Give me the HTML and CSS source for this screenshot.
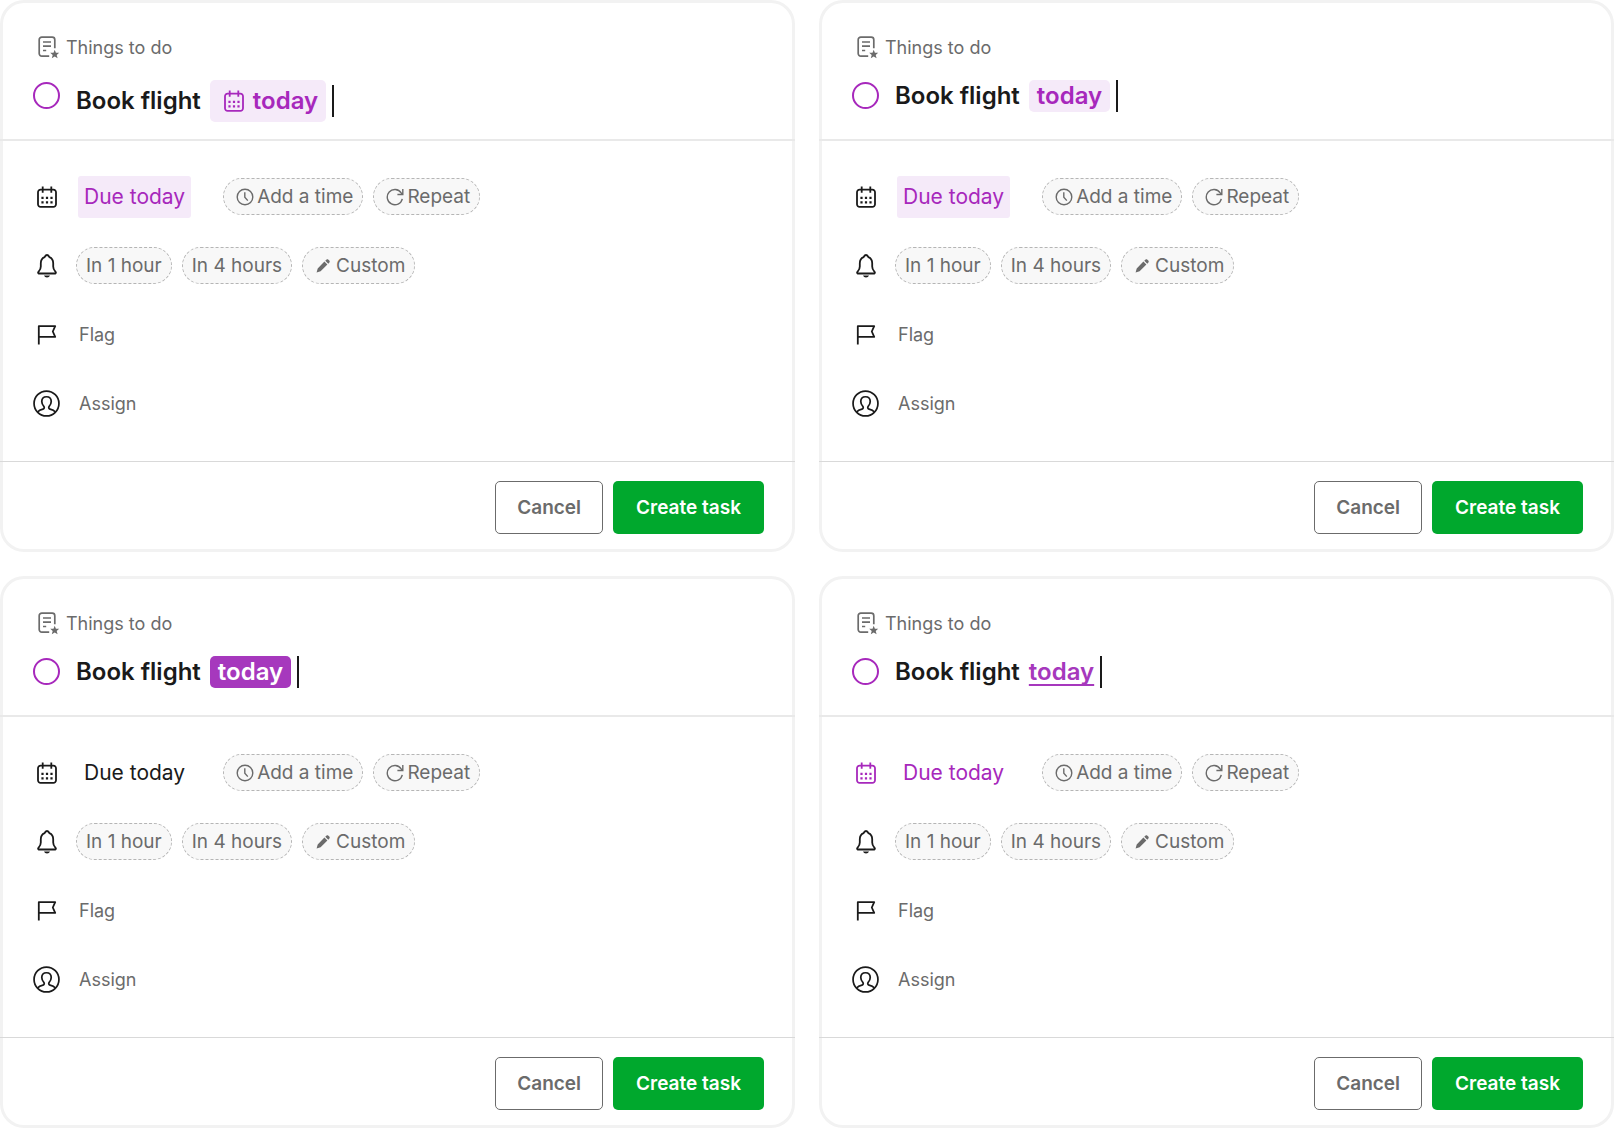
FILE: index.html
```html
<!DOCTYPE html>
<html lang="en">
<head>
  <meta charset="UTF-8">
  <meta name="viewport" content="width=device-width, initial-scale=1.0">
  <title>Create task</title>
  <link rel="stylesheet" href="styles.css">
</head>
<body>
  <!-- shared icons -->
  <svg class="sprite" aria-hidden="true">
    <symbol id="note" viewBox="0 0 22 23">
      <path d="M7.5 20.2H3.8a2.6 2.6 0 0 1-2.6-2.6V3.8a2.6 2.6 0 0 1 2.6-2.6h10.4a2.6 2.6 0 0 1 2.6 2.6v8.4M7.5 20.2h3.7M5 6h8M5 10.2h8M5 14.5h3.2" fill="none" stroke="currentColor" stroke-width="1.7"/>
      <path d="M16.7 13.8l1.2 3h3.3l-2.5 2.1.9 3.4-2.9-1.9-2.9 1.9.9-3.4-2.5-2.1h3.3z" fill="currentColor"/>
    </symbol>
    <symbol id="calendar" viewBox="0 0 20 22">
      <path d="M3.6 3.6h12.8a2.6 2.6 0 0 1 2.6 2.6v12.1a2.6 2.6 0 0 1-2.6 2.6H3.6A2.6 2.6 0 0 1 1 18.3V6.2a2.6 2.6 0 0 1 2.6-2.6zM5.7.5v6.3M14.3.5v6.3" fill="none" stroke="currentColor" stroke-width="1.8"/>
      <path d="M4.4 10.7h2.2v2.2h-2.2zM8.9 10.7h2.2v2.2H8.9zM13.4 10.7h2.2v2.2h-2.2zM4.4 15.3h2.2v2.2h-2.2zM8.9 15.3h2.2v2.2H8.9zM13.4 15.3h2.2v2.2h-2.2z" fill="currentColor"/>
    </symbol>
    <symbol id="clock" viewBox="0 0 18 18">
      <circle cx="9" cy="9" r="7.8" fill="none" stroke="currentColor" stroke-width="1.4"/>
      <path d="M8.8 4.2v5l3 3.4" fill="none" stroke="currentColor" stroke-width="1.4"/>
    </symbol>
    <symbol id="repeat" viewBox="0 0 18 18">
      <path d="M16.3 10.8A7.6 7.6 0 1 1 15.2 4.9L16.6 6.4M16.8 1v5.5h-5.4" fill="none" stroke="currentColor" stroke-width="1.4"/>
    </symbol>
    <symbol id="bell" viewBox="0 0 20 24">
      <path d="M1.5 19.5c-.8-.9-.4-1.5.3-2.2 1.3-1.3 2-2.7 2-4.7V9.3c0-3 1.6-5.2 3.8-6.1C8.2 1.7 9 1 10 1s1.800.7 2.400 2.200c2.200.9 3.800 3.100 3.800 6.100v3.300c0 2 .7 3.400 2 4.700.7.7 1.100 1.300.3 2.200z" fill="none" stroke="currentColor" stroke-width="1.8" stroke-linejoin="round"/>
      <path d="M7 21.600h6c-.5 1.200-1.600 1.900-3 1.900s-2.500-.7-3-1.900z" fill="currentColor"/>
    </symbol>
    <symbol id="pencil" viewBox="0 0 14 14">
      <path d="M.6 13.400l1.100-4 6.700-6.800 3 3-6.800 6.700zM9.300 1.700l.9-.9c.7-.7 1.600-.7 2.200-.1l.9.900c.6.600.6 1.500-.1 2.200l-.9.900z" fill="currentColor"/>
    </symbol>
    <symbol id="flag" viewBox="0 0 20 20">
      <path d="M1.800 19.600V1.200h16.400l-2.400 5.300 2.400 5.400H1.800" fill="none" stroke="currentColor" stroke-width="1.8" stroke-linejoin="round"/>
    </symbol>
    <symbol id="person" viewBox="0 0 28 28">
      <circle cx="14" cy="14" r="12.9" fill="none" stroke="currentColor" stroke-width="1.8"/>
      <path d="M4.800 22.900c1.400-1.800 3.300-2.500 5.500-3 1.200-.3 1.700-1.600 1.100-2.600-1.500-1.600-2.300-3.200-2.300-5.300 0-3 2-5 4.900-5s4.900 2 4.900 5c0 2.100-.8 3.700-2.300 5.300-.6 1-.1 2.300 1.100 2.600 2.200.5 4.100 1.200 5.500 3" fill="none" stroke="currentColor" stroke-width="1.8"/>
    </symbol>
  </svg>

  <main class="board">
    <!-- tinted chip with icon -->
    <form class="card">
      <header class="card-head">
        <div class="list-name"><svg class="icon-note"><use href="#note"/></svg>Things to do</div>
        <div class="task">
          <input class="done" type="checkbox" aria-label="Done">
          <div class="task-name">
            <span>Book flight</span>
            <span class="token token-tint token-icon"><svg class="icon-cal"><use href="#calendar"/></svg>today</span>
            <i class="caret"></i>
          </div>
        </div>
      </header>
      <ul class="options">
        <li>
          <span class="icon"><svg class="icon-cal"><use href="#calendar"/></svg></span>
          <button class="due due-tint" type="button">Due today</button>
          <button class="pill pill-icon" type="button"><svg class="icon-small"><use href="#clock"/></svg>Add a time</button>
          <button class="pill pill-icon" type="button"><svg class="icon-small"><use href="#repeat"/></svg>Repeat</button>
        </li>
        <li>
          <span class="icon"><svg class="icon-bell"><use href="#bell"/></svg></span>
          <button class="pill" type="button">In 1 hour</button>
          <button class="pill" type="button">In 4 hours</button>
          <button class="pill pill-custom" type="button"><svg class="icon-pencil"><use href="#pencil"/></svg>Custom</button>
        </li>
        <li>
          <span class="icon"><svg class="icon-flag"><use href="#flag"/></svg></span>
          <button class="plain" type="button">Flag</button>
        </li>
        <li>
          <span class="icon"><svg class="icon-person"><use href="#person"/></svg></span>
          <button class="plain" type="button">Assign</button>
        </li>
      </ul>
      <footer class="card-foot">
        <button class="btn btn-cancel" type="button">Cancel</button>
        <button class="btn btn-create" type="button">Create task</button>
      </footer>
    </form>

    <!-- tinted chip -->
    <form class="card">
      <header class="card-head">
        <div class="list-name"><svg class="icon-note"><use href="#note"/></svg>Things to do</div>
        <div class="task">
          <input class="done" type="checkbox" aria-label="Done">
          <div class="task-name">
            <span>Book flight</span>
            <span class="token token-tint">today</span>
            <i class="caret"></i>
          </div>
        </div>
      </header>
      <ul class="options">
        <li>
          <span class="icon"><svg class="icon-cal"><use href="#calendar"/></svg></span>
          <button class="due due-tint" type="button">Due today</button>
          <button class="pill pill-icon" type="button"><svg class="icon-small"><use href="#clock"/></svg>Add a time</button>
          <button class="pill pill-icon" type="button"><svg class="icon-small"><use href="#repeat"/></svg>Repeat</button>
        </li>
        <li>
          <span class="icon"><svg class="icon-bell"><use href="#bell"/></svg></span>
          <button class="pill" type="button">In 1 hour</button>
          <button class="pill" type="button">In 4 hours</button>
          <button class="pill pill-custom" type="button"><svg class="icon-pencil"><use href="#pencil"/></svg>Custom</button>
        </li>
        <li>
          <span class="icon"><svg class="icon-flag"><use href="#flag"/></svg></span>
          <button class="plain" type="button">Flag</button>
        </li>
        <li>
          <span class="icon"><svg class="icon-person"><use href="#person"/></svg></span>
          <button class="plain" type="button">Assign</button>
        </li>
      </ul>
      <footer class="card-foot">
        <button class="btn btn-cancel" type="button">Cancel</button>
        <button class="btn btn-create" type="button">Create task</button>
      </footer>
    </form>

    <!-- solid chip -->
    <form class="card">
      <header class="card-head">
        <div class="list-name"><svg class="icon-note"><use href="#note"/></svg>Things to do</div>
        <div class="task">
          <input class="done" type="checkbox" aria-label="Done">
          <div class="task-name">
            <span>Book flight</span>
            <span class="token token-solid">today</span>
            <i class="caret"></i>
          </div>
        </div>
      </header>
      <ul class="options">
        <li>
          <span class="icon"><svg class="icon-cal"><use href="#calendar"/></svg></span>
          <button class="due" type="button">Due today</button>
          <button class="pill pill-icon" type="button"><svg class="icon-small"><use href="#clock"/></svg>Add a time</button>
          <button class="pill pill-icon" type="button"><svg class="icon-small"><use href="#repeat"/></svg>Repeat</button>
        </li>
        <li>
          <span class="icon"><svg class="icon-bell"><use href="#bell"/></svg></span>
          <button class="pill" type="button">In 1 hour</button>
          <button class="pill" type="button">In 4 hours</button>
          <button class="pill pill-custom" type="button"><svg class="icon-pencil"><use href="#pencil"/></svg>Custom</button>
        </li>
        <li>
          <span class="icon"><svg class="icon-flag"><use href="#flag"/></svg></span>
          <button class="plain" type="button">Flag</button>
        </li>
        <li>
          <span class="icon"><svg class="icon-person"><use href="#person"/></svg></span>
          <button class="plain" type="button">Assign</button>
        </li>
      </ul>
      <footer class="card-foot">
        <button class="btn btn-cancel" type="button">Cancel</button>
        <button class="btn btn-create" type="button">Create task</button>
      </footer>
    </form>

    <!-- underlined word -->
    <form class="card">
      <header class="card-head">
        <div class="list-name"><svg class="icon-note"><use href="#note"/></svg>Things to do</div>
        <div class="task">
          <input class="done" type="checkbox" aria-label="Done">
          <div class="task-name">
            <span>Book flight</span>
            <span class="token token-line">today</span>
            <i class="caret"></i>
          </div>
        </div>
      </header>
      <ul class="options">
        <li>
          <span class="icon purple"><svg class="icon-cal"><use href="#calendar"/></svg></span>
          <button class="due purple" type="button">Due today</button>
          <button class="pill pill-icon" type="button"><svg class="icon-small"><use href="#clock"/></svg>Add a time</button>
          <button class="pill pill-icon" type="button"><svg class="icon-small"><use href="#repeat"/></svg>Repeat</button>
        </li>
        <li>
          <span class="icon"><svg class="icon-bell"><use href="#bell"/></svg></span>
          <button class="pill" type="button">In 1 hour</button>
          <button class="pill" type="button">In 4 hours</button>
          <button class="pill pill-custom" type="button"><svg class="icon-pencil"><use href="#pencil"/></svg>Custom</button>
        </li>
        <li>
          <span class="icon"><svg class="icon-flag"><use href="#flag"/></svg></span>
          <button class="plain" type="button">Flag</button>
        </li>
        <li>
          <span class="icon"><svg class="icon-person"><use href="#person"/></svg></span>
          <button class="plain" type="button">Assign</button>
        </li>
      </ul>
      <footer class="card-foot">
        <button class="btn btn-cancel" type="button">Cancel</button>
        <button class="btn btn-create" type="button">Create task</button>
      </footer>
    </form>
  </main>
</body>
</html>
```
FILE: styles.css
```css
* {
  margin: 0;
  padding: 0;
  box-sizing: border-box;
}
body {
  background-color: #fff;
  color: #1a1a1a;
  font-family: Inter, 'Liberation Sans', sans-serif;
  font-size: 18px;
}
button {
  font: inherit;
  color: inherit;
  border: none;
  background: none;
  white-space: nowrap;
  cursor: pointer;
}
svg {
  display: block;
  flex: none;
}
.sprite {
  display: none;
}
.board {
  display: grid;
  grid-template-columns: 1fr 1fr;
  gap: 24px;
}
/* the frame is an inset shadow so the dividers run over it */
.card {
  border-radius: 24px;
  box-shadow: inset 0 0 0 3px #f2f2f2;
}

.card-head {
  min-height: 141px;
  padding: 35px 33px 0;
  border-bottom: 2px solid #e9e9e9;
}
.list-name {
  display: flex;
  align-items: center;
  gap: 6px;
  height: 24px;
  padding-left: 5px;
  color: #6b6b6b;
}
.task {
  display: flex;
  align-items: flex-start;
  gap: 16px;
  margin-top: 21px;
}
.done {
  appearance: none;
  flex: none;
  width: 27px;
  height: 27px;
  margin-top: 2px;
  border: 2px solid #a728bc;
  border-radius: 50%;
}
.task-name {
  display: flex;
  align-items: center;
  gap: 6px;
  font-size: 24px;
  font-weight: 600;
  line-height: 32px;
  white-space: nowrap;
}
.token {
  margin-left: 3px;
  padding: 0 8px;
  border-radius: 5px;
}
.token-tint {
  background-color: #f5eaf9;
  color: #a728bc;
}
.token-icon {
  display: flex;
  align-items: center;
  gap: 9px;
  height: 42px;
  padding-left: 14px;
}
.token-solid {
  background-color: #a638bd;
  color: #fff;
}
.token-line {
  padding: 0;
  border-radius: 0;
  color: #a638bd;
  text-decoration: underline;
  text-decoration-thickness: 2px;
  text-decoration-skip-ink: none;
  text-underline-offset: 4px;
}
.caret {
  width: 2px;
  height: 32px;
  background-color: #1a1a1a;
}

.options {
  list-style: none;
  padding: 21px 33px 23px;
}
.options li {
  display: flex;
  align-items: center;
  gap: 10px;
  height: 69px;
}
.icon {
  display: flex;
  justify-content: center;
  width: 27px;
  margin-right: 6px;
}
.due {
  height: 42px;
  margin: 0 22px 0 2px;
  padding: 0 6px;
  border-radius: 3px;
  font-size: 21px;
}
.due-tint {
  background-color: #f5eaf9;
  color: #a728bc;
}
.purple {
  color: #a728bc;
}
.pill {
  display: flex;
  align-items: center;
  gap: 3px;
  height: 37px;
  padding: 0 9px;
  border: 1px dashed #b5b5b5;
  border-radius: 19px;
  background-color: #f8f8f8;
  color: #6b6b6b;
  font-size: 19px;
}
.pill-icon {
  padding-left: 12px;
}
.pill-custom {
  gap: 6px;
  padding-left: 13px;
}
.plain {
  padding-left: 3px;
  color: #6b6b6b;
}

.card-foot {
  display: flex;
  justify-content: flex-end;
  gap: 10px;
  padding: 19px 31px 18px;
  border-top: 1px solid #d9d9d9;
}
.btn {
  height: 53px;
  border-radius: 5px;
  font-size: 19px;
  font-weight: 600;
}
.btn-cancel {
  padding: 0 21px;
  border: 1px solid #6b6b6b;
  color: #6b6b6b;
}
.btn-create {
  padding: 0 23px;
  background-color: #00a82d;
  color: #fff;
}

.icon-note {
  width: 22px;
  height: 23px;
}
.icon-cal {
  width: 20px;
  height: 22px;
}
.icon-small {
  width: 18px;
  height: 18px;
}
.icon-bell {
  width: 20px;
  height: 24px;
}
.icon-pencil {
  width: 14px;
  height: 14px;
}
.icon-flag {
  width: 20px;
  height: 20px;
}
.icon-person {
  width: 27px;
  height: 27px;
}

@media screen and (max-width: 1000px) {
  .board {
    grid-template-columns: 1fr;
  }
}
```
